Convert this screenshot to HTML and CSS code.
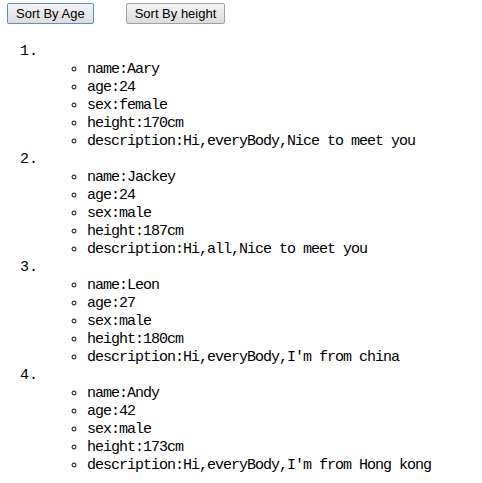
FILE: index.html
```html
<!DOCTYPE html>
<html lang="en">
<head>
  <meta charset="UTF-8">
  <title>Sort People</title>
  <link rel="stylesheet" href="styles.css">
</head>
<body>
  <div class="toolbar">
    <button class="btn btn-focus" id="sortAge">Sort By Age</button>
    <button class="btn" id="sortHeight">Sort By height</button>
  </div>

  <ol class="people">
    <li>
      <ul class="info">
        <li>name:Aary</li>
        <li>age:24</li>
        <li>sex:female</li>
        <li>height:170cm</li>
        <li>description:Hi,everyBody,Nice to meet you</li>
      </ul>
    </li>
    <li>
      <ul class="info">
        <li>name:Jackey</li>
        <li>age:24</li>
        <li>sex:male</li>
        <li>height:187cm</li>
        <li>description:Hi,all,Nice to meet you</li>
      </ul>
    </li>
    <li>
      <ul class="info">
        <li>name:Leon</li>
        <li>age:27</li>
        <li>sex:male</li>
        <li>height:180cm</li>
        <li>description:Hi,everyBody,I'm from china</li>
      </ul>
    </li>
    <li>
      <ul class="info">
        <li>name:Andy</li>
        <li>age:42</li>
        <li>sex:male</li>
        <li>height:173cm</li>
        <li>description:Hi,everyBody,I'm from Hong kong</li>
      </ul>
    </li>
  </ol>
</body>
</html>
```

FILE: styles.css
```css
/* Lista de personas */
body {
  margin: 3px 8px 0 7px;
  background: #fff;
  color: #000;
}

.toolbar {
  display: flex;
  gap: 32px;
}

.btn {
  font-family: "Liberation Sans", Arial, sans-serif;
  font-size: 13px;
  line-height: 15px;
  padding: 2px 8px;
  border: 1px solid #a0a0a0;
  border-radius: 2px;
  background: linear-gradient(#f4f4f4, #e8e8e8 50%, #dcdcdc);
  color: #000;
}

.btn-focus {
  border-color: #5b8fd0;
}

.people {
  font-family: "Liberation Mono", "Courier New", monospace;
  font-size: 15px;
  letter-spacing: -1px;
  line-height: 18px;
  margin: 19px 0 0;
  padding-left: 33px;
  list-style: none;
  counter-reset: person;
}

.people > li {
  counter-increment: person;
}

.people > li::before {
  content: counter(person) ".";
  display: block;
  margin-left: -20px;
  letter-spacing: 0;
}

.info {
  list-style: circle;
  margin: 0;
  padding-left: 47px;
}
```
